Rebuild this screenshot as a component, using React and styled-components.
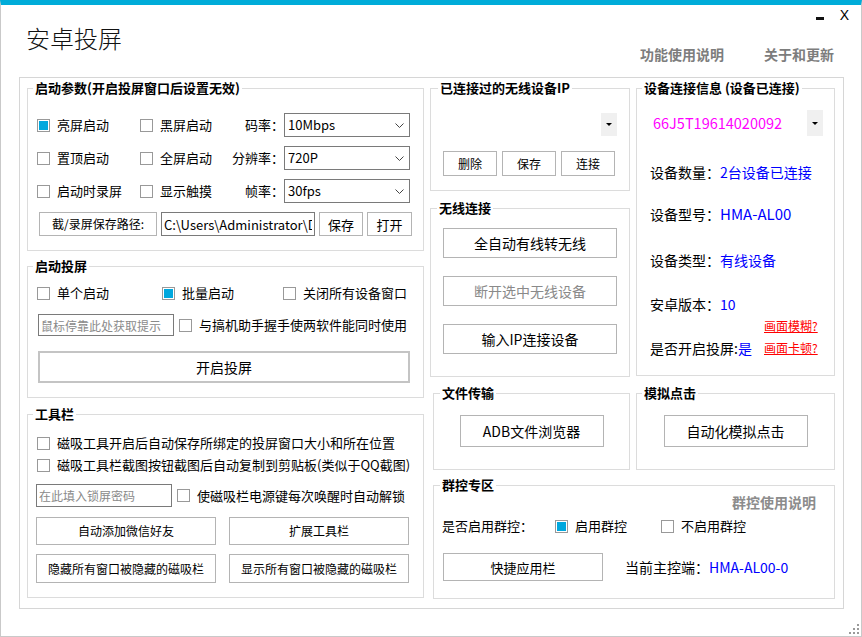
import React from 'react';
import styled, { createGlobalStyle } from 'styled-components';

const FONT = `"Noto Sans CJK SC", "Microsoft YaHei", "Noto Sans", sans-serif`;

const Global = createGlobalStyle`
  html, body { margin: 0; padding: 0; background: #fff; }
  body { font-family: ${FONT}; font-size: 13px; color: #000; }
  * { box-sizing: border-box; }
`;

const Window = styled.div`
  width: 862px;
  height: 637px;
  border: 1px solid #c9c9c9;
  border-top: 5px solid #00acd9;
  background: #fff;
  display: flex;
  flex-direction: column;
  overflow: hidden;
`;

const Header = styled.div`
  height: 72px;
  flex: none;
  display: flex;
  justify-content: space-between;
  align-items: flex-start;
`;

const Title = styled.div`
  margin: 17px 0 0 25px;
  font-size: 24px;
  line-height: 32px;
  font-weight: 300;
  color: #111;
`;

const HeaderRight = styled.div`
  display: flex;
  flex-direction: column;
  align-items: flex-end;
`;

const WinControls = styled.div`
  display: flex;
  align-items: center;
  gap: 16px;
  margin: 0 12px 0 0;
  height: 20px;
`;

const MinBar = styled.div`
  flex: none;
  width: 8px;
  height: 3px;
  margin-top: 6px;
  background-color: #111;
`;

const CloseGlyph = styled.span`
  font-family: "Liberation Sans", Arial, sans-serif;
  font-size: 14px;
  line-height: 20px;
  color: #000;
`;

const TopLinks = styled.div`
  display: flex;
  gap: 40px;
  margin: 19px 27px 0 0;
`;

const TopLink = styled.span`
  font-size: 14px;
  line-height: 20px;
  font-weight: 700;
  color: #7d7d7d;
`;

const Panel = styled.div`
  margin-left: 18px;
  width: 825px;
  height: 532px;
  flex: none;
  border: 1px solid #d6d6d6;
  padding: 2px 8px 10px 7px;
  display: flex;
  gap: 6px;
`;

const Column = styled.div`
  display: flex;
  flex-direction: column;
  width: ${p => p.$w}px;
  flex: none;
`;

const Group = styled.fieldset`
  margin: ${p => p.$mt || 0}px 0 0 ${p => p.$ml || 0}px;
  padding: 0;
  min-width: 0;
  border: 1px solid #dcdcdc;
  height: ${p => p.$h}px;
  width: ${p => (p.$w ? `${p.$w}px` : 'auto')};
  flex: none;
`;

const Legend = styled.legend`
  margin-left: ${p => p.$ml ?? 5}px;
  padding: 0 2px;
  font-size: 13px;
  font-weight: 700;
  line-height: 16px;
  color: #000;
`;

/* ---------- controls ---------- */

const Btn = styled.button`
  font-family: ${FONT};
  font-size: ${p => p.$fs || 12}px;
  color: ${p => (p.$dim ? '#8a8a8a' : '#000')};
  background: #fff;
  border: ${p => (p.$thick ? '2px solid #c4c4c4' : '1px solid #b4b4b4')};
  width: ${p => p.$w}px;
  height: ${p => p.$h}px;
  padding: 0;
  line-height: 1;
  flex: none;
  white-space: nowrap;
`;

const CheckItem = styled.label`
  display: flex;
  align-items: center;
  gap: 7px;
  font-size: ${p => p.$fs || 13}px;
  line-height: 20px;
  white-space: nowrap;
  color: #000;
`;

const Box = styled.span`
  width: 13px;
  height: 13px;
  flex: none;
  border: 1px solid #999;
  background: ${p => (p.$on ? '#00a8de' : '#fff')};
  box-shadow: ${p => (p.$on ? 'inset 0 0 0 1px #fff' : 'none')};
`;

const Check = ({ on, fs, children }) => (
  <CheckItem $fs={fs}>
    <Box $on={on} />
    <span>{children}</span>
  </CheckItem>
);

const SelectBox = styled.div`
  width: 126px;
  height: 24px;
  border: 1px solid #7a7a7a;
  display: flex;
  align-items: center;
  justify-content: space-between;
  padding: 0 5px 0 3px;
  font-size: 13px;
  line-height: 22px;
`;

const Select = ({ value }) => (
  <SelectBox>
    <span>{value}</span>
    <svg width="9" height="5" viewBox="0 0 9 5">
      <polyline points="0.5,0.5 4.5,4.5 8.5,0.5" fill="none" stroke="#444" strokeWidth="1" />
    </svg>
  </SelectBox>
);

const TextInput = styled.input`
  width: ${p => p.$w}px;
  height: ${p => p.$h}px;
  flex: none;
  border: 1px solid #7a7a7a;
  padding: 0 2px;
  font-family: ${FONT};
  font-size: ${p => p.$fs || 12}px;
  color: ${p => (p.$hint ? '#8a8a8a' : '#000')};
  background: #fff;
  outline: none;
`;

const DropBtn = styled.div`
  width: 16px;
  height: ${p => p.$h}px;
  background: #f0f0f0;
  display: flex;
  align-items: center;
  justify-content: center;
  flex: none;
`;

const Arrow = () => (
  <svg width="6" height="3" viewBox="0 0 6 3">
    <polygon points="0,0 6,0 3,3" fill="#000" />
  </svg>
);

/* ---------- left column ---------- */

const ParamBody = styled.div`
  padding: 17px 13px 0 9px;
  display: flex;
  flex-direction: column;
  gap: 9px;
`;

const ParamRow = styled.div`
  display: grid;
  grid-template-columns: 103px 1fr auto 126px;
  align-items: center;
  height: 24px;
`;

const FieldLabel = styled.span`
  font-size: 13px;
  line-height: 20px;
  text-align: right;
`;

const PathRow = styled.div`
  display: flex;
  gap: 4px;
  height: 24px;
  margin-left: 2px;
`;

const LaunchBody = styled.div`
  padding: 9px 0 0 9px;
  display: flex;
  flex-direction: column;
`;

const LaunchRow = styled.div`
  display: grid;
  grid-template-columns: 125px 121px auto;
  height: 20px;
  align-items: center;
`;

const HintRow = styled.div`
  display: flex;
  align-items: center;
  gap: 5px;
  margin: ${p => p.$mt}px 0 0 ${p => p.$ml || 0}px;
  height: ${p => p.$h}px;
`;

const BigBtnWrap = styled.div`
  margin: 15px 0 0 1px;
`;

const ToolBody = styled.div`
  padding: 11px 0 0 8px;
  display: flex;
  flex-direction: column;
`;

const ToolCheckRow = styled.div`
  display: flex;
  align-items: center;
  height: 20px;
  margin: ${p => p.$mt || 0}px 0 0 1px;
`;

const ToolBtnGrid = styled.div`
  margin-top: 10px;
  display: grid;
  grid-template-columns: 180px 180px;
  grid-template-rows: 28px 29px;
  column-gap: 13px;
  row-gap: 9px;
`;

/* ---------- right area ---------- */

const TopRow = styled.div`
  display: flex;
  gap: 6px;
`;

const BottomRow = styled.div`
  display: flex;
  gap: 6px;
  margin: 8px 0 0 3px;
`;

const IpBody = styled.div`
  padding: 0 12px 0 12px;
  display: flex;
  flex-direction: column;
`;

const ComboRow = styled.div`
  display: flex;
  align-items: center;
  justify-content: ${p => p.$justify || 'flex-end'};
  margin-top: ${p => p.$mt}px;
  height: ${p => p.$h}px;
`;

const BtnRow = styled.div`
  display: flex;
  gap: 5px;
  margin-top: ${p => p.$mt}px;
`;

const StackBody = styled.div`
  padding: 12px 0 0 12px;
  display: flex;
  flex-direction: column;
  gap: 18px;
`;

const InfoBody = styled.div`
  padding: 0 11px 0 13px;
  display: flex;
  flex-direction: column;
`;

const Serial = styled.span`
  margin-left: 3px;
  font-size: 14.5px;
  line-height: 20px;
  color: #ff00ff;
`;

const InfoRow = styled.div`
  margin-top: ${p => p.$mt}px;
  height: 20px;
  display: flex;
  align-items: center;
  font-size: 14px;
  line-height: 20px;
  white-space: nowrap;
`;

const Blue = styled.span`
  color: #0000ff;
  font-size: ${p => p.$fs || 14}px;
`;

const LinkGrid = styled.div`
  margin-top: 2px;
  display: grid;
  grid-template-columns: 114px auto;
  grid-auto-rows: 20px;
  row-gap: 2px;
  align-items: center;
  font-size: 14px;
  line-height: 20px;
  white-space: nowrap;
`;

const RedLink = styled.span`
  font-size: 12px;
  color: #ff0000;
  text-decoration: underline;
`;

const Centered = styled.div`
  display: flex;
  justify-content: center;
  padding-top: 14px;
`;

const GroupCtlBody = styled.div`
  padding: 0 18px 0 8px;
  display: flex;
  flex-direction: column;
`;

const HelpRow = styled.div`
  display: flex;
  justify-content: flex-end;
  height: 18px;
  align-items: center;
`;

const HelpLink = styled.span`
  font-size: 14px;
  font-weight: 700;
  color: #8c8c8c;
  line-height: 18px;
`;

const EnableRow = styled.div`
  display: grid;
  grid-template-columns: 113px 106px auto;
  align-items: center;
  margin-top: 5px;
  height: 20px;
  font-size: 13px;
  line-height: 20px;
`;

const MasterRow = styled.div`
  display: flex;
  align-items: center;
  gap: 22px;
  margin: 17px 0 0 1px;
  font-size: 14px;
  line-height: 20px;
`;

const Footer = styled.div`
  flex: 1;
  display: flex;
  justify-content: flex-end;
  align-items: flex-end;
  padding: 0 1px 1px 0;
`;

const Grip = () => (
  <svg width="11" height="11" viewBox="0 0 11 11">
    {[
      [8, 0],
      [4, 4],
      [8, 4],
      [0, 8],
      [4, 8],
      [8, 8],
    ].map(([x, y]) => (
      <rect key={`${x}-${y}`} x={x} y={y} width="2" height="2" fill="#9a9a9a" />
    ))}
  </svg>
);

export default function App() {
  return (
    <>
      <Global />
      <Window>
        <Header>
          <Title>安卓投屏</Title>
          <HeaderRight>
            <WinControls>
              <MinBar />
              <CloseGlyph>X</CloseGlyph>
            </WinControls>
            <TopLinks>
              <TopLink>功能使用说明</TopLink>
              <TopLink>关于和更新</TopLink>
            </TopLinks>
          </HeaderRight>
        </Header>

        <Panel>
          <Column $w={397}>
            <Group $h={171}>
              <Legend>启动参数(开启投屏窗口后设置无效)</Legend>
              <ParamBody>
                <ParamRow>
                  <Check on>亮屏启动</Check>
                  <Check>黑屏启动</Check>
                  <FieldLabel>码率：</FieldLabel>
                  <Select value="10Mbps" />
                </ParamRow>
                <ParamRow>
                  <Check>置顶启动</Check>
                  <Check>全屏启动</Check>
                  <FieldLabel>分辨率：</FieldLabel>
                  <Select value="720P" />
                </ParamRow>
                <ParamRow>
                  <Check>启动时录屏</Check>
                  <Check>显示触摸</Check>
                  <FieldLabel>帧率：</FieldLabel>
                  <Select value="30fps" />
                </ParamRow>
                <PathRow>
                  <Btn $w={118} $h={24}>截/录屏保存路径:</Btn>
                  <TextInput $w={154} $h={24} $fs={13} readOnly defaultValue={'C:\\Users\\Administrator\\Desktop'} />
                  <Btn $w={44} $h={24} $fs={13}>保存</Btn>
                  <Btn $w={45} $h={24} $fs={13}>打开</Btn>
                </PathRow>
              </ParamBody>
            </Group>

            <Group $h={140} $mt={7}>
              <Legend>启动投屏</Legend>
              <LaunchBody>
                <LaunchRow>
                  <Check>单个启动</Check>
                  <Check on>批量启动</Check>
                  <Check>关闭所有设备窗口</Check>
                </LaunchRow>
                <HintRow $mt={11} $h={22} $ml={1}>
                  <TextInput $w={136} $h={22} $hint readOnly defaultValue="鼠标停靠此处获取提示" />
                  <Check>与搞机助手握手使两软件能同时使用</Check>
                </HintRow>
                <BigBtnWrap>
                  <Btn $w={372} $h={32} $fs={14} $thick>开启投屏</Btn>
                </BigBtnWrap>
              </LaunchBody>
            </Group>

            <Group $h={192} $mt={8}>
              <Legend>工具栏</Legend>
              <ToolBody>
                <ToolCheckRow>
                  <Check>磁吸工具开启后自动保存所绑定的投屏窗口大小和所在位置</Check>
                </ToolCheckRow>
                <ToolCheckRow $mt={2}>
                  <Check>磁吸工具栏截图按钮截图后自动复制到剪贴板(类似于QQ截图)</Check>
                </ToolCheckRow>
                <HintRow $mt={9} $h={23}>
                  <TextInput $w={136} $h={23} $hint readOnly defaultValue="在此填入锁屏密码" />
                  <Check>使磁吸栏电源键每次唤醒时自动解锁</Check>
                </HintRow>
                <ToolBtnGrid>
                  <Btn $w={180} $h={28}>自动添加微信好友</Btn>
                  <Btn $w={180} $h={28}>扩展工具栏</Btn>
                  <Btn $w={180} $h={29}>隐藏所有窗口被隐藏的磁吸栏</Btn>
                  <Btn $w={180} $h={29}>显示所有窗口被隐藏的磁吸栏</Btn>
                </ToolBtnGrid>
              </ToolBody>
            </Group>
          </Column>

          <Column $w={405}>
            <TopRow>
              <Column $w={200}>
                <Group $h={111}>
                  <Legend $ml={7}>已连接过的无线设备IP</Legend>
                  <IpBody>
                    <ComboRow $mt={17} $h={23}>
                      <DropBtn $h={23}>
                        <Arrow />
                      </DropBtn>
                    </ComboRow>
                    <BtnRow $mt={15}>
                      <Btn $w={54} $h={25}>删除</Btn>
                      <Btn $w={54} $h={25}>保存</Btn>
                      <Btn $w={54} $h={25}>连接</Btn>
                    </BtnRow>
                  </IpBody>
                </Group>
                <Group $h={177} $mt={9}>
                  <Legend $ml={6}>无线连接</Legend>
                  <StackBody>
                    <Btn $w={174} $h={30} $fs={14}>全自动有线转无线</Btn>
                    <Btn $w={174} $h={30} $fs={14} $dim>断开选中无线设备</Btn>
                    <Btn $w={174} $h={30} $fs={14}>输入IP连接设备</Btn>
                  </StackBody>
                </Group>
              </Column>
              <Group $h={296} $w={199}>
                <Legend>设备连接信息 (设备已连接)</Legend>
                <InfoBody>
                  <ComboRow $mt={14} $h={26} $justify="space-between">
                    <Serial>66J5T19614020092</Serial>
                    <DropBtn $h={26}>
                      <Arrow />
                    </DropBtn>
                  </ComboRow>
                  <InfoRow $mt={26}>
                    设备数量：<Blue>2台设备已连接</Blue>
                  </InfoRow>
                  <InfoRow $mt={22}>
                    设备型号：<Blue $fs={15}>HMA-AL00</Blue>
                  </InfoRow>
                  <InfoRow $mt={26}>
                    设备类型：<Blue>有线设备</Blue>
                  </InfoRow>
                  <InfoRow $mt={24}>
                    安卓版本：<Blue>10</Blue>
                  </InfoRow>
                  <LinkGrid>
                    <span />
                    <RedLink>画面模糊?</RedLink>
                    <span>
                      是否开启投屏:<Blue>是</Blue>
                    </span>
                    <RedLink>画面卡顿?</RedLink>
                  </LinkGrid>
                </InfoBody>
              </Group>
            </TopRow>

            <BottomRow>
              <Group $h={85} $w={197}>
                <Legend $ml={6}>文件传输</Legend>
                <Centered>
                  <Btn $w={144} $h={32} $fs={14}>ADB文件浏览器</Btn>
                </Centered>
              </Group>
              <Group $h={85} $w={199}>
                <Legend>模拟点击</Legend>
                <Centered>
                  <Btn $w={144} $h={32} $fs={14}>自动化模拟点击</Btn>
                </Centered>
              </Group>
            </BottomRow>

            <Group $h={122} $w={402} $mt={7} $ml={3}>
              <Legend $ml={6}>群控专区</Legend>
              <GroupCtlBody>
                <HelpRow>
                  <HelpLink>群控使用说明</HelpLink>
                </HelpRow>
                <EnableRow>
                  <span>是否启用群控：</span>
                  <Check on>启用群控</Check>
                  <Check>不启用群控</Check>
                </EnableRow>
                <MasterRow>
                  <Btn $w={160} $h={28} $fs={13}>快捷应用栏</Btn>
                  <span>
                    当前主控端：<Blue>HMA-AL00-0</Blue>
                  </span>
                </MasterRow>
              </GroupCtlBody>
            </Group>
          </Column>
        </Panel>
        <Footer>
          <Grip />
        </Footer>
      </Window>
    </>
  );
}
